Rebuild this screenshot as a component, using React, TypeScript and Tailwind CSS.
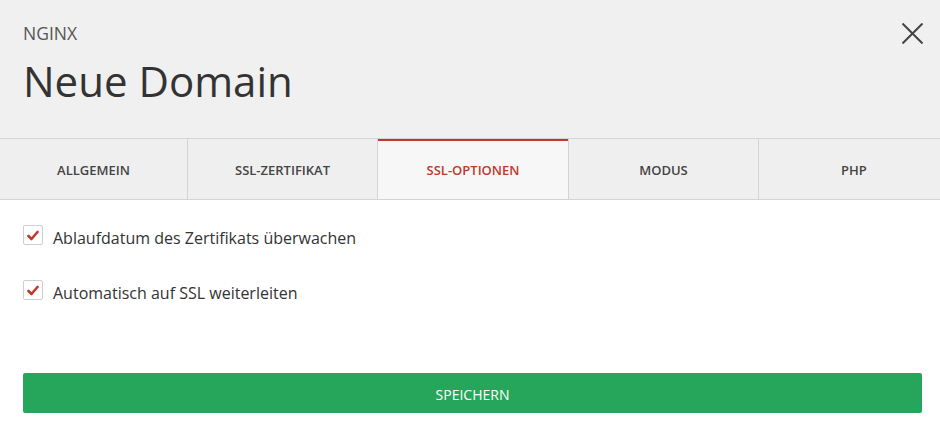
import React from "react";

const tabs = [
  { label: "ALLGEMEIN", w: "w-[188px]" },
  { label: "SSL-ZERTIFIKAT", w: "w-[190px]" },
  { label: "SSL-OPTIONEN", w: "w-[191px]", active: true },
  { label: "MODUS", w: "w-[190px]" },
  { label: "PHP", w: "flex-1 pl-[9px]" },
];

function Check({ label }: { label: string }) {
  return (
    <label className="flex items-center h-[20px]">
      <span className="w-[20px] h-[20px] border border-[#cfcfcf] rounded-[2px] bg-white flex items-center justify-center shrink-0">
        <svg width="12" height="11" viewBox="0 0 12 11" fill="none">
          <path d="M1.5 6 L4.5 9 L10.5 2" stroke="#c0392b" strokeWidth="2.6" strokeLinecap="round" strokeLinejoin="round" />
        </svg>
      </span>
      <span className="ml-[10px] text-[16px] text-[#333] leading-none mt-[6px]">{label}</span>
    </label>
  );
}

export default function App() {
  return (
    <div className="w-[940px] h-[431px] bg-white overflow-hidden" style={{ fontFamily: "'Open Sans', 'Noto Sans', sans-serif" }}>
      <div className="relative bg-[#f0f0f0] h-[138px] px-[23px] pt-[25px]">
        <div className="text-[17.5px] leading-none text-[#555]">NGINX</div>
        <div className="mt-[17px] text-[42px] leading-none text-[#333]">Neue Domain</div>
        <button className="absolute top-[23px] right-[17px] w-[21px] h-[21px]">
          <svg width="21" height="21" viewBox="0 0 21 21">
            <path d="M0.5 0.5 L20.5 20.5 M20.5 0.5 L0.5 20.5" stroke="#444" strokeWidth="2" />
          </svg>
        </button>
      </div>
      <div className="flex h-[62px] border-t border-b border-[#d4d4d4] bg-[#efefef]">
        {tabs.map((t, i) => (
          <div
            key={t.label}
            className={`${t.w} relative flex items-center justify-center pt-[3px] text-[13px] font-semibold ${i < 4 ? "border-r border-[#d4d4d4]" : ""} ${t.active ? "bg-[#f7f7f7] text-[#c0392b]" : "text-[#444]"}`}
          >
            {t.active && <div className="absolute top-0 left-0 right-0 h-[2px] bg-[#c0392b]" />}
            {t.label}
          </div>
        ))}
      </div>
      <div className="pl-[23px] pr-[18px] pt-[25px]">
        <Check label="Ablaufdatum des Zertifikats überwachen" />
        <div className="mt-[35px]">
          <Check label="Automatisch auf SSL weiterleiten" />
        </div>
        <button className="mt-[73px] w-full h-[40px] pt-[3px] rounded-[2px] bg-[#26a65b] text-white text-[14px] font-medium">
          SPEICHERN
        </button>
      </div>
    </div>
  );
}
